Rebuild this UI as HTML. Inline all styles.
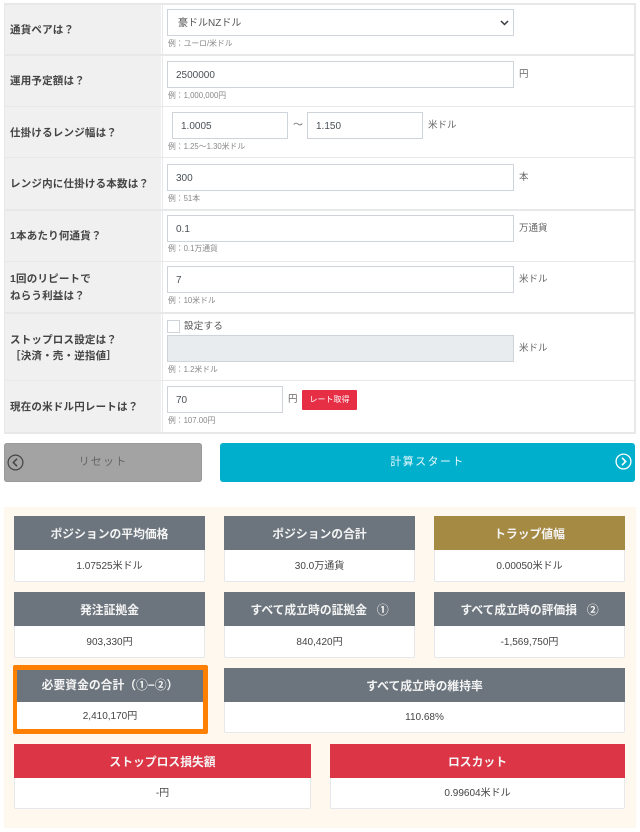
<!DOCTYPE html>
<html lang="ja"><head><meta charset="utf-8"><title>計算</title>
<style>
*{box-sizing:border-box}
html,body{margin:0;padding:0;background:#fff}
body{position:relative;width:640px;height:832px;overflow:hidden;font-family:"Liberation Sans","Noto Sans CJK JP",sans-serif;color:#333;font-size:10px}
.a{position:absolute;white-space:nowrap}
.line{position:absolute;background:#e6e8ea}
.lab{position:absolute;left:5px;width:156px;background:#f0f0f0;font-size:10.5px;font-weight:700;color:#444;letter-spacing:.2px;display:flex;align-items:center;padding-left:5px;line-height:17px;white-space:nowrap}
.in{position:absolute;height:27px;background:#fff;border:1px solid #ced4da;font-size:10px;color:#495057;line-height:27px;padding-left:8px}
.hint{position:absolute;left:168px;font-size:7.8px;color:#888;white-space:nowrap;line-height:10px;margin-top:1px}
.unit{position:absolute;font-size:9.5px;color:#666;white-space:nowrap;line-height:12px;margin-top:1px}
.card{position:absolute;background:#fff;border:1px solid #e6e8ec;border-radius:2px;text-align:center}
.card .h{position:absolute;left:-1px;right:-1px;top:-1px;height:34px;background:#6c757d;color:#f4f4f4;font-size:11.8px;font-weight:700;line-height:36px;white-space:nowrap}
.card .v{position:absolute;left:0;right:0;top:33px;bottom:0;font-size:10px;color:#444;line-height:33px;white-space:nowrap}
.red .h{background:#dc3545}
.gold .h{background:#a58a43}
</style></head><body>
<div class="line" style="left:4px;top:3px;width:632px;height:2px"></div>
<div class="line" style="left:4px;top:3px;width:1px;height:430px"></div>
<div class="line" style="left:634px;top:3px;width:2px;height:430px"></div>
<div class="line" style="left:162px;top:3px;width:1px;height:430px"></div>
<div class="line" style="left:4px;top:54px;width:632px;height:2px"></div>
<div class="line" style="left:4px;top:106px;width:632px;height:1px"></div>
<div class="line" style="left:4px;top:157px;width:632px;height:1px"></div>
<div class="line" style="left:4px;top:209px;width:632px;height:2px"></div>
<div class="line" style="left:4px;top:261px;width:632px;height:1px"></div>
<div class="line" style="left:4px;top:312px;width:632px;height:2px"></div>
<div class="line" style="left:4px;top:380px;width:632px;height:1px"></div>
<div class="line" style="left:4px;top:432px;width:632px;height:2px"></div>

<div class="lab" style="top:5px;height:49px;padding-top:2px">通貨ペアは？</div>
<div class="lab" style="top:56px;height:50px">運用予定額は？</div>
<div class="lab" style="top:107px;height:50px;padding-top:2px">仕掛けるレンジ幅は？</div>
<div class="lab" style="top:158px;height:51px;padding-top:2px">レンジ内に仕掛ける本数は？</div>
<div class="lab" style="top:211px;height:50px">1本あたり何通貨？</div>
<div class="lab" style="top:262px;height:50px;padding-top:2px">1回のリピートで<br>ねらう利益は？</div>
<div class="lab" style="top:314px;height:66px;line-height:16px;padding-top:1px">ストップロス設定は？<br>［決済・売・逆指値］</div>
<div class="lab" style="top:381px;height:51px;padding-top:2px">現在の米ドル円レートは？</div>

<div class="in" style="left:167px;top:9px;width:347px;padding-left:10px;color:#555">豪ドルNZドル
<svg style="position:absolute;right:4px;top:10px" width="9" height="6" viewBox="0 0 9 6"><path d="M1 1l3.5 3.5L8 1" fill="none" stroke="#343a40" stroke-width="1.5"/></svg></div>
<div class="hint" style="top:38px">例：ユーロ/米ドル</div>

<div class="in" style="left:167px;top:61px;width:347px">2500000</div>
<div class="unit" style="left:519px;top:68px">円</div>
<div class="hint" style="top:90px">例：1,000,000円</div>

<div class="in" style="left:172px;top:112px;width:116px">1.0005</div>
<div class="unit" style="left:293px;top:119px;font-size:10px">～</div>
<div class="in" style="left:307px;top:112px;width:116px">1.150</div>
<div class="unit" style="left:428px;top:119px">米ドル</div>
<div class="hint" style="top:141px">例：1.25～1.30米ドル</div>

<div class="in" style="left:167px;top:164px;width:347px">300</div>
<div class="unit" style="left:519px;top:171px">本</div>
<div class="hint" style="top:193px">例：51本</div>

<div class="in" style="left:167px;top:215px;width:347px">0.1</div>
<div class="unit" style="left:519px;top:222px">万通貨</div>
<div class="hint" style="top:243px">例：0.1万通貨</div>

<div class="in" style="left:167px;top:266px;width:347px">7</div>
<div class="unit" style="left:519px;top:273px">米ドル</div>
<div class="hint" style="top:295px">例：10米ドル</div>

<div class="a" style="left:167px;top:320px;width:13px;height:13px;background:#fff;border:1px solid #ced4da"></div>
<div class="a" style="left:184px;top:320px;font-size:9.5px;color:#555;line-height:13px;letter-spacing:.3px">設定する</div>
<div class="in" style="left:167px;top:335px;width:347px;background:#e9ecef"></div>
<div class="unit" style="left:519px;top:342px">米ドル</div>
<div class="hint" style="top:364px">例：1.2米ドル</div>

<div class="in" style="left:167px;top:386px;width:116px">70</div>
<div class="unit" style="left:288px;top:393px">円</div>
<div class="a" style="left:302px;top:390px;width:55px;height:20px;background:#e62e45;color:#fff;font-size:8px;font-weight:400;line-height:19px;text-align:center;border-radius:1px">レート取得</div>
<div class="hint" style="top:415px">例：107.00円</div>

<div class="a" style="left:4px;top:443px;width:198px;height:39px;background:#a3a3a3;border-radius:3px;text-align:center;font-size:11px;font-weight:400;color:#666;line-height:38px;letter-spacing:1.2px;box-shadow:inset 0 0 0 1px #9a9a9a">リセット
<svg style="position:absolute;left:3px;top:11px" width="17" height="17" viewBox="0 0 17 17"><circle cx="8.5" cy="8.5" r="7.4" fill="none" stroke="#444" stroke-width="1.2"/><path d="M10 4.8L6.3 8.5l3.7 3.7" fill="none" stroke="#444" stroke-width="1.5"/></svg></div>
<div class="a" style="left:220px;top:443px;width:415px;height:39px;background:#00afcc;border-radius:3px;text-align:center;font-size:11px;color:#e8f8fb;line-height:39px;letter-spacing:1.4px">計算スタート
<svg style="position:absolute;left:395px;top:10px" width="17" height="17" viewBox="0 0 17 17"><circle cx="8.5" cy="8.5" r="7.4" fill="none" stroke="#fff" stroke-width="1.3"/><path d="M7 4.8l3.7 3.7L7 12.2" fill="none" stroke="#fff" stroke-width="1.6"/></svg></div>

<div class="a" style="left:4px;top:507px;width:632px;height:321px;background:#fff8ee"></div>

<div class="card" style="left:14px;top:516px;width:191px;height:66px"><div class="h">ポジションの平均価格</div><div class="v">1.07525米ドル</div></div>
<div class="card" style="left:224px;top:516px;width:191px;height:66px"><div class="h">ポジションの合計</div><div class="v">30.0万通貨</div></div>
<div class="card gold" style="left:434px;top:516px;width:191px;height:66px"><div class="h">トラップ値幅</div><div class="v">0.00050米ドル</div></div>

<div class="card" style="left:14px;top:592px;width:191px;height:66px"><div class="h">発注証拠金</div><div class="v">903,330円</div></div>
<div class="card" style="left:224px;top:592px;width:191px;height:66px"><div class="h">すべて成立時の証拠金&nbsp;&nbsp;&nbsp;①</div><div class="v">840,420円</div></div>
<div class="card" style="left:434px;top:592px;width:191px;height:66px"><div class="h">すべて成立時の評価損&nbsp;&nbsp;&nbsp;②</div><div class="v">-1,569,750円</div></div>

<div class="a" style="left:13px;top:665px;width:195px;height:69px;background:#ff8000;border-radius:2px"></div>
<div class="card" style="left:17px;top:670px;width:186px;height:59px;border:0;border-radius:0"><div class="h" style="top:0;left:0;right:0;height:32px;line-height:31px">必要資金の合計（①−②）</div><div class="v" style="top:32px;line-height:29px">2,410,170円</div></div>
<div class="card" style="left:224px;top:668px;width:401px;height:65px"><div class="h">すべて成立時の維持率</div><div class="v" style="line-height:32px">110.68%</div></div>

<div class="card red" style="left:14px;top:744px;width:297px;height:65px"><div class="h">ストップロス損失額</div><div class="v" style="line-height:32px">-円</div></div>
<div class="card red" style="left:330px;top:744px;width:295px;height:65px"><div class="h">ロスカット</div><div class="v" style="line-height:32px">0.99604米ドル</div></div>
</body></html>
